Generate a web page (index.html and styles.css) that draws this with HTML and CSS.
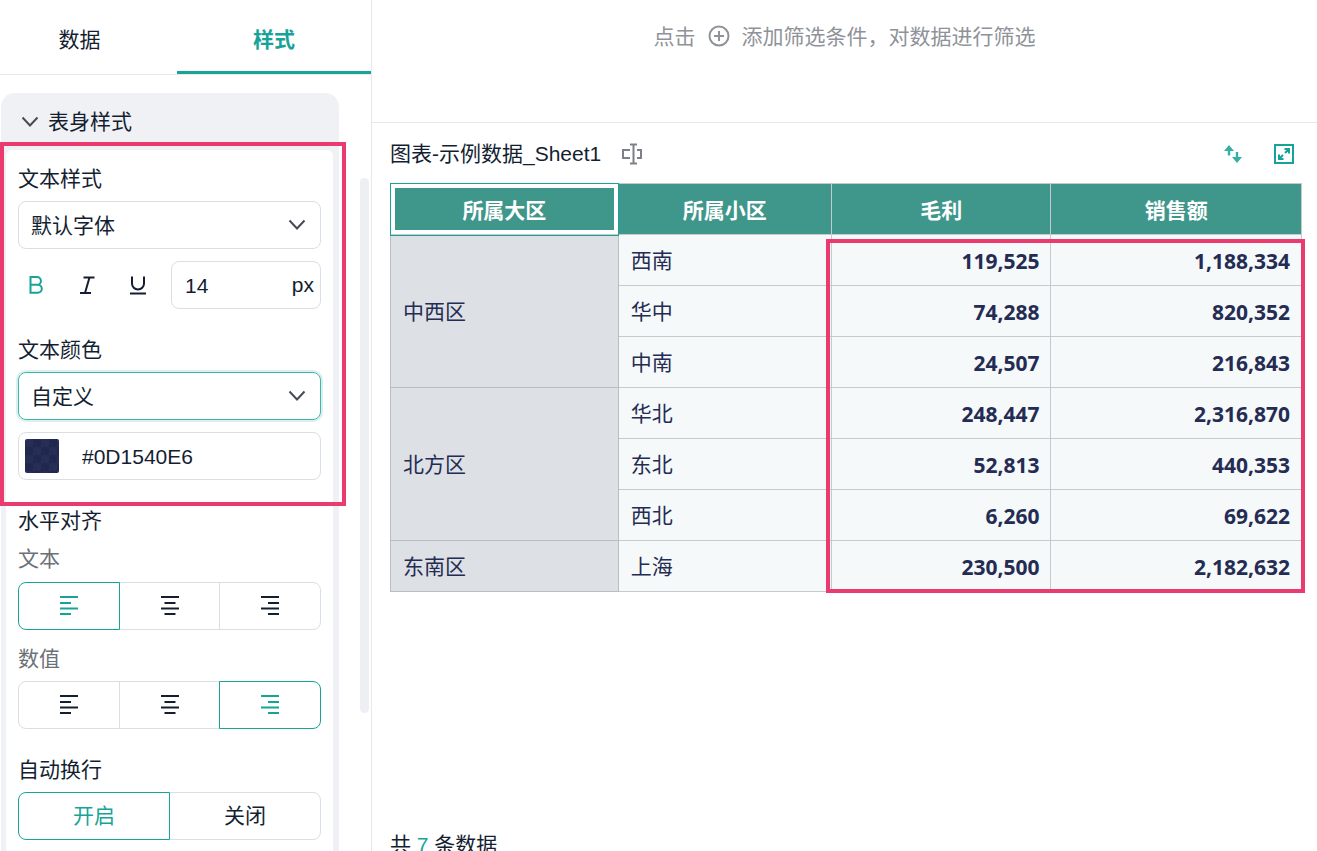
FILE: index.html
```html
<!DOCTYPE html>
<html lang="zh-Hans">
<head>
  <meta charset="UTF-8">
  <meta name="viewport" content="width=device-width, initial-scale=1">
  <title>图表-示例数据_Sheet1</title>
  <link rel="stylesheet" href="styles.css">
</head>
<body>
  <!-- icons used more than once -->
  <svg class="sprite" aria-hidden="true">
    <symbol id="align-left" viewBox="0 0 20 20"><path d="M1 1h18M1 7h11M1 12.5h18M1 18h11"/></symbol>
    <symbol id="align-center" viewBox="0 0 20 20"><path d="M1 1h18M4.500 7h11M1 12.500h18M4.500 18h11"/></symbol>
    <symbol id="align-right" viewBox="0 0 20 20"><path d="M1 1h18M8 7h11M1 12.500h18M8 18h11"/></symbol>
    <symbol id="chevron" viewBox="0 0 18 12"><path d="M1.500 1.500L9 9.500l7.500-8"/></symbol>
  </svg>

  <div class="layout">
    <aside class="sidebar">
      <div class="tabs" role="tablist">
        <button class="tab" role="tab" type="button">数据</button>
        <button class="tab tab-style active" role="tab" type="button">样式</button>
      </div>
      <div class="sidebar-body">
        <section class="panel">
          <button class="panel-header" type="button">
            <svg class="chevron"><use href="#chevron"/></svg>
            表身样式
          </button>
          <form class="panel-body">
            <div class="group">
              <label class="title" for="font">文本样式</label>
              <div class="select-box">
                <select id="font"><option>默认字体</option></select>
                <svg class="chevron"><use href="#chevron"/></svg>
              </div>
              <div class="font-row">
                <button class="icon-btn on" type="button" aria-label="加粗">
                  <svg width="18" height="20" viewBox="0 0 18 20"><path d="M3.500 2h6.500a3.900 3.900 0 0 1 0 7.800H3.500zM3.500 9.800h7.300a4 4 0 0 1 0 8H3.500z"/></svg>
                </button>
                <button class="icon-btn" type="button" aria-label="斜体">
                  <svg width="18" height="20" viewBox="0 0 18 20"><path d="M5.500 2.500h11M2 18h11M11.500 2.500l-4.500 15.500"/></svg>
                </button>
                <button class="icon-btn" type="button" aria-label="下划线">
                  <svg width="18" height="20" viewBox="0 0 18 20"><path d="M3 1.500v7a6 6 0 0 0 12 0v-7M1 18.500h16"/></svg>
                </button>
                <div class="field size-field">
                  <input id="size" type="text" value="14" aria-label="字号">
                  <label for="size">px</label>
                </div>
              </div>
            </div>

            <div class="group">
              <label class="title" for="color-mode">文本颜色</label>
              <div class="select-box focus">
                <select id="color-mode"><option>自定义</option></select>
                <svg class="chevron"><use href="#chevron"/></svg>
              </div>
              <div class="field color-field">
                <button class="swatch" type="button" aria-label="选择颜色"></button>
                <input type="text" value="#0D1540E6" aria-label="颜色值">
              </div>
            </div>

            <div class="group">
              <div class="title">水平对齐</div>
              <div class="subtitle">文本</div>
              <div class="segment">
                <label><input type="radio" name="text-align" aria-label="左对齐" checked><svg class="align"><use href="#align-left"/></svg></label>
                <label><input type="radio" name="text-align" aria-label="居中"><svg class="align"><use href="#align-center"/></svg></label>
                <label><input type="radio" name="text-align" aria-label="右对齐"><svg class="align"><use href="#align-right"/></svg></label>
              </div>
              <div class="subtitle">数值</div>
              <div class="segment">
                <label><input type="radio" name="num-align" aria-label="左对齐"><svg class="align"><use href="#align-left"/></svg></label>
                <label><input type="radio" name="num-align" aria-label="居中"><svg class="align"><use href="#align-center"/></svg></label>
                <label><input type="radio" name="num-align" aria-label="右对齐" checked><svg class="align"><use href="#align-right"/></svg></label>
              </div>
            </div>

            <div class="group">
              <div class="title">自动换行</div>
              <div class="segment">
                <label><input type="radio" name="wrap" checked>开启</label>
                <label><input type="radio" name="wrap">关闭</label>
              </div>
            </div>
          </form>
          <div class="mark mark-style"></div>
        </section>
        <div class="scroll-thumb"></div>
      </div>
    </aside>

    <main class="main">
      <div class="filter-bar">
        <span>点击</span>
        <svg width="22" height="22" viewBox="0 0 22 22"><circle cx="11" cy="11" r="9.500"/><path d="M11 6v10M6 11h10"/></svg>
        <span>添加筛选条件，对数据进行筛选</span>
      </div>
      <section class="chart">
        <header class="chart-header">
          <h1>图表-示例数据_Sheet1</h1>
          <button class="tool rename" type="button" aria-label="重命名">
            <svg width="22" height="22" viewBox="0 0 22 22"><path d="M9 7H2v8h7M16 7h4v8h-4M9 1.500h7M9 20.500h7M12.500 1.500v19"/></svg>
          </button>
          <button class="tool sort" type="button" aria-label="排序">
            <svg width="20" height="20" viewBox="0 0 20 20"><path d="M6 1l5 6H7.200v4.500H4.800V7H1zM14 19l-5-6h3.800V8h2.400v5H19z"/></svg>
          </button>
          <button class="tool expand" type="button" aria-label="放大">
            <svg width="20" height="20" viewBox="0 0 20 20"><path d="M1 1h18v18H1zM10.500 5H15v4.500M15 5l-4 4M9.500 15H5v-4.500M5 15l4-4"/></svg>
          </button>
        </header>
        <div class="chart-body">
          <div class="table-wrap">
            <table>
              <colgroup>
                <col class="col-area"><col class="col-district"><col class="col-profit"><col class="col-sales">
              </colgroup>
              <thead>
                <tr><th class="selected">所属大区</th><th>所属小区</th><th>毛利</th><th>销售额</th></tr>
              </thead>
              <tbody>
                <tr><td class="area" rowspan="3">中西区</td><td>西南</td><td class="num">119,525</td><td class="num">1,188,334</td></tr>
                <tr><td>华中</td><td class="num">74,288</td><td class="num">820,352</td></tr>
                <tr><td>中南</td><td class="num">24,507</td><td class="num">216,843</td></tr>
                <tr><td class="area" rowspan="3">北方区</td><td>华北</td><td class="num">248,447</td><td class="num">2,316,870</td></tr>
                <tr><td>东北</td><td class="num">52,813</td><td class="num">440,353</td></tr>
                <tr><td>西北</td><td class="num">6,260</td><td class="num">69,622</td></tr>
                <tr><td class="area">东南区</td><td>上海</td><td class="num">230,500</td><td class="num">2,182,632</td></tr>
              </tbody>
            </table>
            <div class="mark mark-numbers"></div>
          </div>
        </div>
        <footer class="count">共 <span>7</span> 条数据</footer>
      </section>
    </main>
  </div>
</body>
</html>
```
FILE: styles.css
```css
:root {
  --teal: #17a398;
  --text: #141e31;
  --line: #dcdee2;
  --panel: #f0f1f5;
  --mark: #ea3a6e;
}
* {
  box-sizing: border-box;
}
body {
  margin: 0;
  height: 100vh;
  overflow: hidden;
  background: #fff;
  color: var(--text);
  font: 21px/24px "Liberation Sans", "Noto Sans CJK SC", sans-serif;
}
button, input, select {
  margin: 0;
  padding: 0;
  border: 0;
  background: none;
  color: inherit;
  font: inherit;
  outline: none;
}
svg {
  display: block;
  fill: none;
  stroke: currentColor;
  stroke-width: 2;
}
.sprite {
  position: absolute;
  width: 0;
  height: 0;
}
.layout {
  display: flex;
  height: 100vh;
}

/* left settings column */
.sidebar {
  display: flex;
  flex-direction: column;
  flex: none;
  width: 372px;
  border-right: 1px solid #e6e8eb;
}
.tabs {
  display: flex;
  flex: none;
  height: 75px;
  border-bottom: 1px solid #e6e8eb;
}
.tab {
  flex: 0 0 177px;
  padding: 9px 18px 0 0;
  border-bottom: 3px solid transparent;
}
.tab-style {
  flex: 1;
  padding-right: 0;
}
.tab.active {
  border-color: var(--teal);
  color: var(--teal);
  font-weight: 700;
}
.sidebar-body {
  display: flex;
  flex: 1;
  align-items: flex-start;
  min-height: 0;
  padding: 0 2px 0 1px;
}
.panel {
  position: relative;
  flex: 1;
  min-width: 0;
  margin: 18px 21px 0 0;
  border-radius: 14px 14px 0 0;
  background: var(--panel);
}
.panel-header {
  display: flex;
  align-items: center;
  gap: 9px;
  width: 100%;
  height: 57px;
  padding-left: 20px;
}
.chevron {
  flex: none;
  width: 18px;
  height: 12px;
  color: #474b57;
}
.panel-body {
  margin: 0 6px 0 5px;
  padding: 17px 12px 24px;
  border-radius: 6px 6px 0 0;
  background: #fff;
}
.group + .group {
  margin-top: 29px;
}
.title {
  display: block;
  margin-bottom: 10px;
}
.subtitle {
  margin: 14px 0 11px;
  color: #6c7078;
}
.segment + .subtitle {
  margin: 17px 0 10px;
}
.select-box, .field {
  display: flex;
  align-items: center;
  height: 48px;
  border: 1px solid var(--line);
  border-radius: 8px;
}
.select-box {
  padding: 0 14px 0 12px;
}
.select-box select {
  flex: 1;
  height: 46px;
  padding-top: 2px;
  appearance: none;
}
.select-box.focus {
  border-color: #3db5a8;
  box-shadow: 0 0 0 2px #d9f0ee;
}
.field input {
  flex: 1;
  min-width: 0;
  padding-top: 2px;
}
.font-row {
  display: flex;
  align-items: center;
  gap: 33px;
  margin-top: 12px;
  padding-left: 9px;
}
.icon-btn {
  flex: none;
}
.icon-btn.on {
  color: var(--teal);
}
.size-field {
  width: 150px;
  margin-left: auto;
  padding: 0 6px 0 13px;
}
.font-row .size-field {
  flex: none;
  margin-left: -9px;
}
.color-field {
  gap: 23px;
  margin-top: 12px;
  padding: 0 6px;
}
.swatch {
  width: 34px;
  height: 34px;
  border-radius: 2px;
  background: repeating-conic-gradient(#20284f 0 25%, #272e55 0 50%) 0 0 / 16px 16px;
}
.segment {
  display: flex;
}
.segment label {
  position: relative;
  display: flex;
  flex: 1;
  align-items: center;
  justify-content: center;
  height: 48px;
  border: 1px solid var(--line);
}
.segment label + label {
  margin-left: -1px;
}
.segment label:first-child {
  border-radius: 8px 0 0 8px;
}
.segment label:last-child {
  border-radius: 0 8px 8px 0;
}
.segment label:has(:checked) {
  z-index: 1;
  border-color: var(--teal);
  color: var(--teal);
}
.segment input {
  position: absolute;
  opacity: 0;
}
.align {
  width: 20px;
  height: 20px;
}
.scroll-thumb {
  width: 9px;
  height: 69%;
  margin-top: 103px;
  border-radius: 5px;
  background: #eeeff2;
}

/* highlight frames over the page */
.mark {
  position: absolute;
  z-index: 2;
  border: 4px solid var(--mark);
  pointer-events: none;
}
.mark-style {
  top: 49px;
  left: -1px;
  right: -7px;
  height: 364px;
}
.mark-numbers {
  top: 56px;
  left: 47.8%;
  right: -3px;
  bottom: -1px;
}

/* chart area */
.main {
  display: flex;
  flex: 1;
  flex-direction: column;
  min-width: 0;
}
.filter-bar {
  display: flex;
  flex: none;
  justify-content: center;
  gap: 12px;
  height: 123px;
  padding-top: 25px;
  border-bottom: 1px solid #e6e8eb;
  color: #8f9299;
}
.chart {
  padding: 18px 15px 0 18px;
}
.chart-header {
  display: flex;
  align-items: center;
  height: 26px;
  margin-bottom: 16px;
}
.chart-header h1 {
  margin: 0;
  font-size: 21px;
  font-weight: 400;
}
.tool {
  color: var(--teal);
}
.rename {
  margin-left: 20px;
  color: #7d8088;
}
.sort {
  margin-left: auto;
  color: #35b1a4;
}
.sort svg {
  fill: currentColor;
  stroke: none;
}
.expand {
  margin: 0 8px 0 31px;
}
.chart-body {
  min-height: 650px;
}
.table-wrap {
  position: relative;
}
table {
  width: 100%;
  border-collapse: collapse;
  table-layout: fixed;
}
.col-area {
  width: 25%;
}
.col-district {
  width: 23.4%;
}
.col-profit {
  width: 24.1%;
}
.col-sales {
  width: 27.5%;
}
th, td {
  height: 51px;
  padding: 2px 12px 0;
  border: 1px solid #c6cacc;
}
th {
  padding-top: 4px;
  background: #3f968b;
  color: #fff;
  font-weight: 700;
}
th.selected {
  outline: 1px solid var(--teal);
  box-shadow: inset 0 0 0 4px #fff;
}
td {
  background: #f5f9fa;
  color: #252c53;
}
td.area {
  border-color: #b9bec2;
  background: #dde0e5;
}
td.num {
  padding-right: 11px;
  font-family: "Noto Sans", "Noto Sans CJK SC", sans-serif;
  font-weight: 700;
  text-align: right;
}
.count span {
  color: var(--teal);
}
```
